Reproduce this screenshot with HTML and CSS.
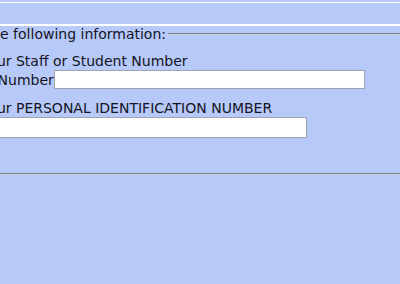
FILE: index.html
```html
<!DOCTYPE html>
<html lang="en">
<head>
    <meta charset="UTF-8">
    <title>Login</title>
    <link rel="stylesheet" href="styles.css">
</head>
<body>
    <div class="page">
        <div class="top-rule"></div>
        <div class="band"></div>
        <form class="login">
            <fieldset>
                <legend>Please enter the following information:</legend>
                <div class="fields">
                    <p class="hint">Enter your Staff or Student Number</p>
                    <div class="row">
                        <label for="sid">Student Number</label><input type="text" id="sid" class="id-input">
                    </div>
                    <p class="hint">Enter your PERSONAL IDENTIFICATION NUMBER</p>
                    <div class="row">
                        <label for="pin" class="pin-label">PIN</label><input type="password" id="pin" class="pin-input">
                    </div>
                </div>
            </fieldset>
        </form>
    </div>
</body>
</html>
```
FILE: styles.css
```css
body {
    margin: 0;
    background-color: #b7c9f8;
    font-family: "DejaVu Sans", Verdana, sans-serif;
    font-size: 14px;
    color: #14141f;
    overflow: hidden;
}
.page {
    margin-left: -120px;
    width: 700px;
}
.top-rule {
    margin-top: 2px;
    height: 1px;
    background-color: #ffffff;
}
.band {
    height: 21px;
    border-bottom: 2px solid #ffffff;
}
.login {
    margin: 0;
}
fieldset {
    margin: 0;
    padding: 0 10px 35px 10px;
    border: 2px groove #c8cfe0;
}
legend {
    padding: 0 2px;
}
.fields {
    margin-left: 46px;
}
.hint {
    margin: 11px 0 0 0;
}
.row {
    display: flex;
    align-items: center;
    margin-top: 1px;
}
.row label {
    white-space: nowrap;
}
.pin-label {
    width: 58px;
}
input {
    border: 1px solid #a0a4b0;
    padding: 0;
    margin: 0;
    background: #fff;
}
.id-input {
    width: 309px;
    height: 17px;
}
.pin-input {
    width: 309px;
    height: 19px;
}
```
